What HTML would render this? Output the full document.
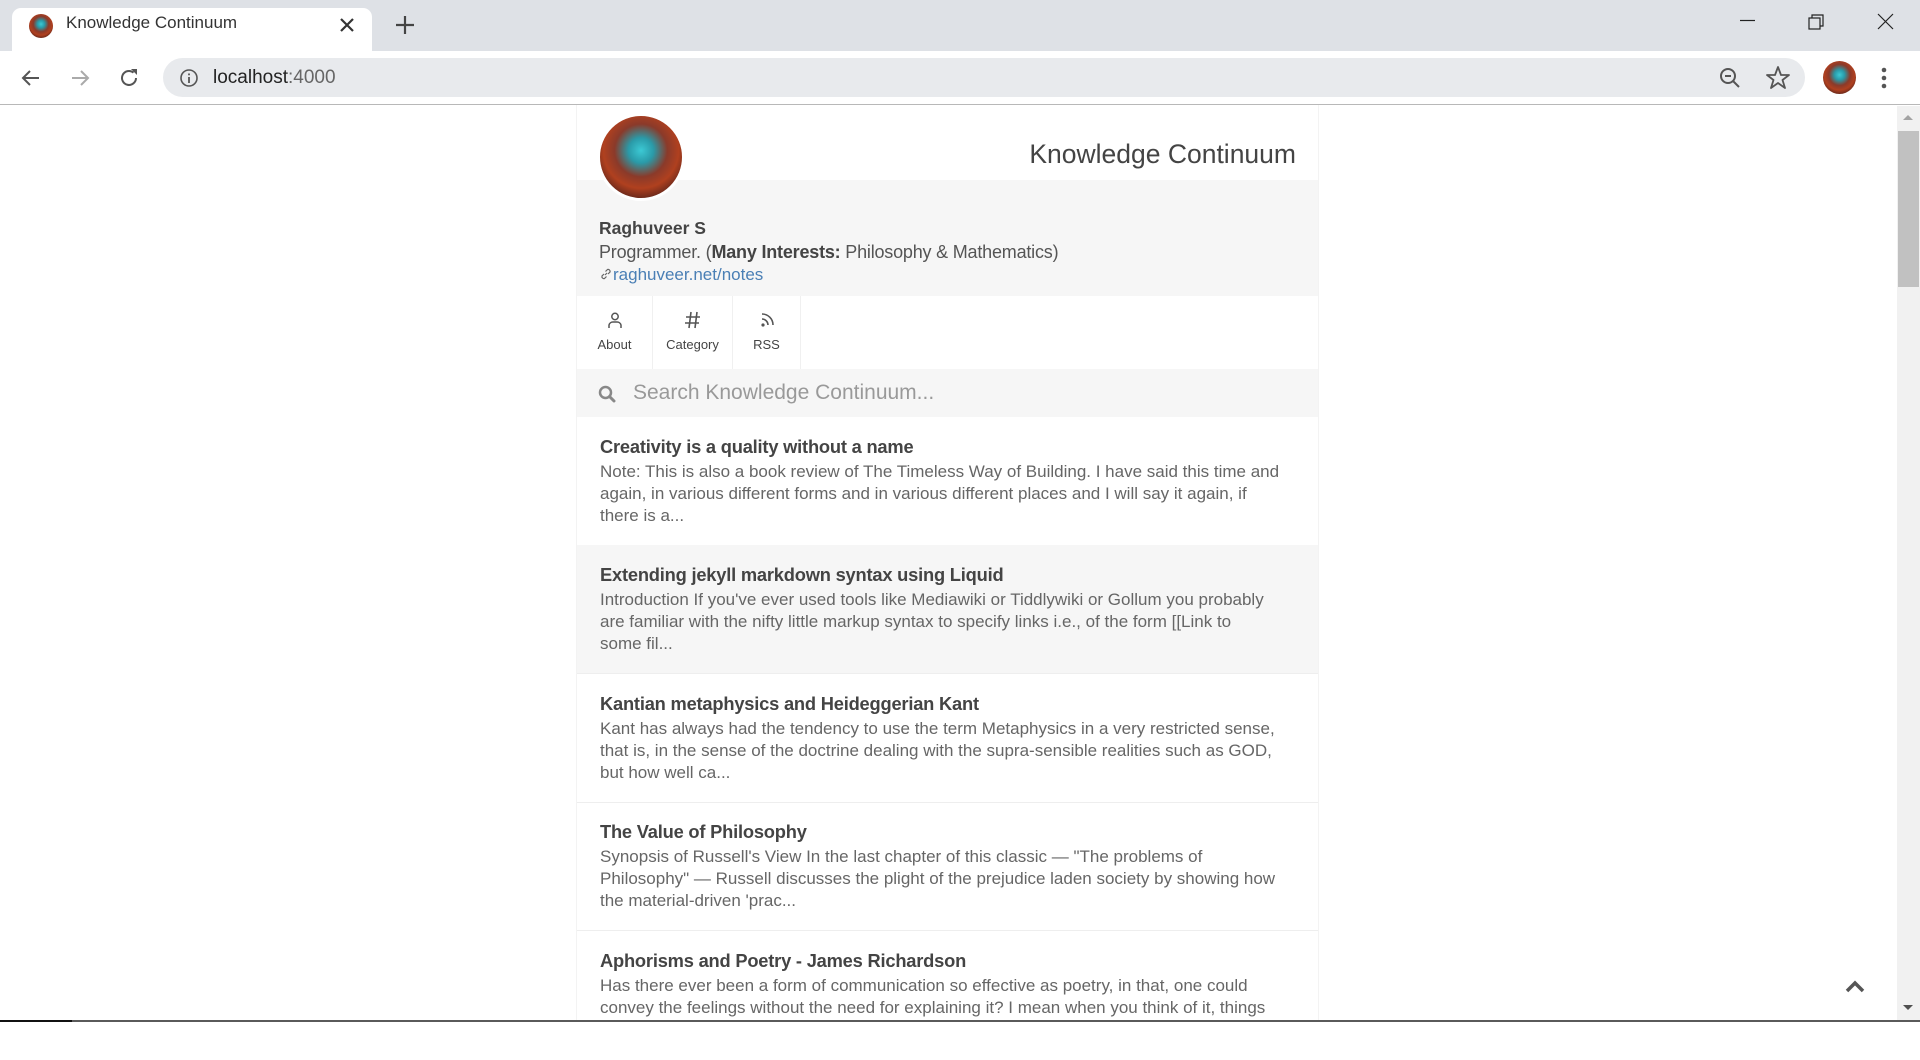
<!DOCTYPE html>
<html><head><meta charset="utf-8">
<style>
*{box-sizing:border-box;margin:0;padding:0}
body{width:1920px;height:1022px;overflow:hidden;background:#fff;font-family:"Liberation Sans",sans-serif;position:relative}
.abs{position:absolute}
#tabbar{left:0;top:0;width:1920px;height:51px;background:#dee1e6}
#tab{left:12px;top:8px;width:360px;height:43px;background:#fff;border-radius:9px 9px 0 0}
#toolbar{left:0;top:51px;width:1920px;height:54px;background:#fff;border-bottom:1px solid #b8b8b8}
#omni{left:163px;top:58px;width:1642px;height:39px;border-radius:20px;background:#e8eaed}
.av{border-radius:50%;background:radial-gradient(circle at 50% 42%,#3cc9d4 0,#2a9aa8 20%,#8a3a2a 42%,#b0401f 60%,#3a1a1a 88%)}
#col{left:576px;top:105px;width:743px;height:915px;background:#fff;border-left:1px solid #f3f3f3;border-right:1px solid #f3f3f3}
.post{position:absolute;left:0;width:741px;height:129px;padding:19px 23px 0;border-bottom:1px solid #eee;color:#555}
.post h3{font-size:18.3px;line-height:22px;color:#444;font-weight:bold;letter-spacing:-0.2px;white-space:nowrap}
.post p{margin-top:3px;font-size:17px;line-height:22px;color:#666;white-space:nowrap}
.nav{position:absolute;top:191px;height:73px;text-align:center;font-size:13px;color:#444;border-right:1px solid #f0f0f0}
.nav span{position:absolute;left:0;right:0;top:41px}
.nav svg{position:absolute;left:50%;top:15px;margin-left:-9px}
</style></head><body>
<div id="tabbar" class="abs"></div>
<div id="tab" class="abs"></div>
<div class="abs av" style="left:29px;top:14px;width:24px;height:24px"></div>
<div class="abs" style="left:66px;top:13px;font-size:17px;color:#333">Knowledge Continuum</div>
<svg class="abs" style="left:339px;top:17px" width="16" height="16"><path d="M2 2L14 14M14 2L2 14" stroke="#333" stroke-width="2.2"/></svg>
<svg class="abs" style="left:395px;top:15px" width="20" height="20"><path d="M10 1V19M1 10H19" stroke="#444" stroke-width="2.2"/></svg>
<svg class="abs" style="left:1740px;top:19px" width="16" height="4"><path d="M0 1.5H15" stroke="#222" stroke-width="1.2"/></svg>
<svg class="abs" style="left:1808px;top:13px" width="18" height="18"><rect x="1" y="5" width="11" height="11" fill="none" stroke="#222" stroke-width="1.2"/><path d="M4 5V2H15V13H12" fill="none" stroke="#222" stroke-width="1.2"/></svg>
<svg class="abs" style="left:1877px;top:13px" width="18" height="18"><path d="M1 1L16 16M16 1L1 16" stroke="#222" stroke-width="1.2"/></svg>
<div id="toolbar" class="abs"></div>
<svg class="abs" style="left:20px;top:67px" width="22" height="22"><path d="M19 11H3M10 4L3 11L10 18" fill="none" stroke="#555" stroke-width="2"/></svg>
<svg class="abs" style="left:69px;top:67px" width="22" height="22"><path d="M3 11H19M12 4L19 11L12 18" fill="none" stroke="#aaa" stroke-width="2"/></svg>
<svg class="abs" style="left:117px;top:66px" width="24" height="24"><path d="M19 12A7 7 0 1 1 16.5 6.6" fill="none" stroke="#555" stroke-width="2"/><path d="M14 3H20V9Z" fill="#555"/></svg>
<div id="omni" class="abs"></div>
<svg class="abs" style="left:179px;top:68px" width="20" height="20"><circle cx="10" cy="10" r="8" fill="none" stroke="#555" stroke-width="1.6"/><path d="M10 9V15M10 5.5V7.3" stroke="#555" stroke-width="1.8"/></svg>
<div class="abs" style="left:213px;top:67px;font-size:19px;color:#222">localhost<span style="color:#666">:4000</span></div>
<svg class="abs" style="left:1718px;top:66px" width="24" height="24"><circle cx="10" cy="10" r="7" fill="none" stroke="#555" stroke-width="2"/><path d="M15 15L21 21M7 10H13" stroke="#555" stroke-width="2"/></svg>
<svg class="abs" style="left:1765px;top:65px" width="26" height="26"><path d="M13 2L16 10H24L17.5 15L20 23L13 18L6 23L8.5 15L2 10H10Z" fill="none" stroke="#555" stroke-width="1.8" stroke-linejoin="round"/></svg>
<div class="abs av" style="left:1823px;top:61px;width:33px;height:33px"></div>
<svg class="abs" style="left:1880px;top:66px" width="8" height="24"><circle cx="4" cy="4" r="2.3" fill="#555"/><circle cx="4" cy="12" r="2.3" fill="#555"/><circle cx="4" cy="20" r="2.3" fill="#555"/></svg>

<div id="col" class="abs">
  <div class="abs" style="left:0;top:75px;width:741px;height:116px;background:#f6f6f6"></div>
  <div class="abs av" style="left:20px;top:8px;width:88px;height:88px;border:3px solid #fff"></div>
  <div class="abs" style="right:22px;top:34px;font-size:26.5px;color:#444">Knowledge Continuum</div>
  <div class="abs" style="left:22px;top:113px;font-size:17.5px;font-weight:bold;color:#444">Raghuveer S</div>
  <div class="abs" style="left:22px;top:137px;font-size:18px;color:#555;letter-spacing:-0.2px">Programmer. (<b style="color:#444">Many Interests:</b> Philosophy &amp; Mathematics)</div>
  <div class="abs" style="left:22px;top:160px;font-size:17px;color:#4a7fb5"><svg width="14" height="14" style="vertical-align:-1px"><path d="M6 8L8 6M5 7L3 9A2 2 0 0 0 5.5 11.5L7.5 9.5M9 7L11 5A2 2 0 0 0 8.5 2.5L6.5 4.5" fill="none" stroke="#666" stroke-width="1.2"/></svg>raghuveer.net/notes</div>
  <div class="nav" style="left:0;width:76px"><svg width="18" height="18"><circle cx="9" cy="5.5" r="3.2" fill="none" stroke="#555" stroke-width="1.5"/><path d="M3 17V14A4 4 0 0 1 7 11H11A4 4 0 0 1 15 14V17" fill="none" stroke="#555" stroke-width="1.5"/></svg><span>About</span></div>
  <div class="nav" style="left:76px;width:80px"><svg width="18" height="18"><path d="M7 1L5 17M13 1L11 17M2 6H16M1 12H15" stroke="#555" stroke-width="1.6"/></svg><span>Category</span></div>
  <div class="nav" style="left:156px;width:68px"><svg width="18" height="18"><circle cx="5" cy="14" r="1.6" fill="#555"/><path d="M4 8A6 6 0 0 1 10 14M4 3A11 11 0 0 1 15 14" fill="none" stroke="#555" stroke-width="1.6"/></svg><span>RSS</span></div>
  <div class="abs" style="left:0;top:264px;width:741px;height:48px;background:#f6f6f6"></div>
  <svg class="abs" style="left:21px;top:280px" width="18" height="18"><circle cx="7.5" cy="7.5" r="5.5" fill="none" stroke="#888" stroke-width="2.5"/><path d="M11.5 11.5L16 16" stroke="#888" stroke-width="3" stroke-linecap="round"/></svg>
  <div class="abs" style="left:56px;top:276px;font-size:21px;color:#999">Search Knowledge Continuum...</div>

  <div class="post" style="top:312px"><h3>Creativity is a quality without a name</h3><p>Note: This is also a book review of The Timeless Way of Building. I have said this time and<br>again, in various different forms and in various different places and I will say it again, if<br>there is a...</p></div>
  <div class="post" style="top:440px;background:#f6f6f6"><h3>Extending jekyll markdown syntax using Liquid</h3><p>Introduction If you've ever used tools like Mediawiki or Tiddlywiki or Gollum you probably<br>are familiar with the nifty little markup syntax to specify links i.e., of the form [[Link to<br>some fil...</p></div>
  <div class="post" style="top:569px"><h3>Kantian metaphysics and Heideggerian Kant</h3><p>Kant has always had the tendency to use the term Metaphysics in a very restricted sense,<br>that is, in the sense of the doctrine dealing with the supra-sensible realities such as GOD,<br>but how well ca...</p></div>
  <div class="post" style="top:697px"><h3>The Value of Philosophy</h3><p>Synopsis of Russell's View In the last chapter of this classic — "The problems of<br>Philosophy" — Russell discusses the plight of the prejudice laden society by showing how<br>the material-driven 'prac...</p></div>
  <div class="post" style="top:826px;border:none"><h3>Aphorisms and Poetry - James Richardson</h3><p>Has there ever been a form of communication so effective as poetry, in that, one could<br>convey the feelings without the need for explaining it? I mean when you think of it, things</p></div>
</div>

<div class="abs" style="left:1897px;top:106px;width:23px;height:914px;background:#f1f1f1"></div>
<div class="abs" style="left:1898px;top:131px;width:21px;height:156px;background:#c1c1c1"></div>
<svg class="abs" style="left:1902px;top:113px" width="12" height="8"><path d="M1 7L6 2L11 7Z" fill="#a3a3a3"/></svg>
<svg class="abs" style="left:1902px;top:1004px" width="12" height="8"><path d="M1 1L6 6L11 1Z" fill="#505050"/></svg>
<svg class="abs" style="left:1845px;top:980px" width="20" height="14"><path d="M2 11L10 3L18 11" fill="none" stroke="#555" stroke-width="3.5"/></svg>
<div class="abs" style="left:0;top:1020px;width:1920px;height:2px;background:#5a5a5a"></div>
<div class="abs" style="left:0;top:1020px;width:72px;height:2px;background:#111"></div>
</body></html>
